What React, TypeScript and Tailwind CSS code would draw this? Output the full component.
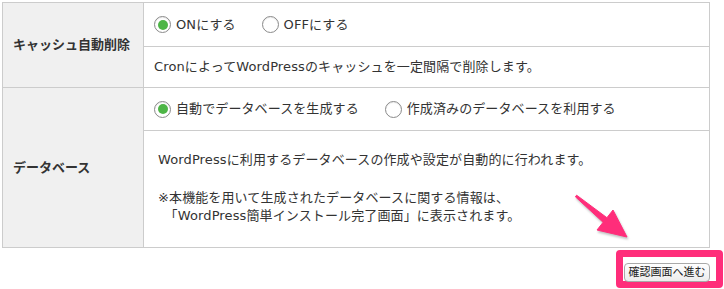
import React from "react";

const font = { fontFamily: '"DejaVu Sans", "Noto Sans CJK JP", sans-serif' };

function Radio({ checked, label }: { checked?: boolean; label: string }) {
  return (
    <div className="flex items-center">
      <span className="w-[17px] h-[17px] rounded-full border border-[#8a8a8a] bg-white flex items-center justify-center shadow-[inset_0_1px_1px_rgba(0,0,0,0.08)]">
        {checked && <span className="w-[10px] h-[10px] rounded-full bg-[#4db546]" />}
      </span>
      <span className="ml-[5px] text-[13px] text-[#333] tracking-[0.1px]">{label}</span>
    </div>
  );
}

export default function App() {
  return (
    <div className="relative w-[724px] h-[289px] bg-white overflow-hidden" style={font}>
      <div className="pt-[2px] pl-[2px]">
        <div className="w-[708px] border border-[#cccccc]">
          {/* Row 1 */}
          <div className="flex border-b border-[#cccccc]">
            <div className="w-[141px] shrink-0 bg-[#f0f0f0] border-r border-[#cccccc] flex items-center pl-[10px] text-[13px] font-bold text-[#333]">
              キャッシュ自動削除
            </div>
            <div className="flex-1">
              <div className="h-[44px] border-b border-[#cccccc] flex items-center pl-[10px] gap-[26px]">
                <Radio checked label="ONにする" />
                <Radio label="OFFにする" />
              </div>
              <div className="h-[40px] flex items-center pl-[10px] text-[13px] text-[#333] tracking-[0.12px]">
                CronによってWordPressのキャッシュを一定間隔で削除します。
              </div>
            </div>
          </div>
          {/* Row 2 */}
          <div className="flex">
            <div className="w-[141px] shrink-0 bg-[#f0f0f0] border-r border-[#cccccc] flex items-center pl-[10px] text-[13px] font-bold text-[#333]">
              データベース
            </div>
            <div className="flex-1">
              <div className="h-[43px] border-b border-[#cccccc] flex items-center pl-[10px] gap-[26px]">
                <Radio checked label="自動でデータベースを生成する" />
                <Radio label="作成済みのデータベースを利用する" />
              </div>
              <div className="h-[116px] pl-[14px] pt-[20px] text-[13px] leading-[18px] text-[#333] tracking-[0.12px]">
                <p>WordPressに利用するデータベースの作成や設定が自動的に行われます。</p>
                <p className="mt-[20px]">※本機能を用いて生成されたデータベースに関する情報は、</p>
                <p>　「WordPress簡単インストール完了画面」に表示されます。</p>
              </div>
            </div>
          </div>
        </div>
      </div>
      <div className="flex justify-end pr-[1px] mt-[2px]">
        <div className="w-[107px] h-[38px] border-[7px] border-[#ff2d7a] rounded-[4px] bg-white pl-[1px] pt-[2px]">
          <button className="w-[86px] h-[19px] rounded-[4px] border border-[#a9a9a9] bg-gradient-to-b from-white to-[#ececec] text-[11px] leading-[17px] text-[#222] text-center" style={font}>
            確認画面へ進む
          </button>
        </div>
      </div>
      <svg className="absolute left-[560px] top-[185px] drop-shadow-[1px_2px_1px_rgba(0,0,0,0.25)]" width="80" height="60" viewBox="0 0 80 60">
        <polygon
          points="16.6,10.2 46.9,32.7 53,25 67,52 37,45 43.1,37.3 15.4,11.8"
          fill="#ff2d7a"
          stroke="#ff2d7a"
          strokeWidth="1"
          strokeLinejoin="round"
        />
      </svg>
    </div>
  );
}
